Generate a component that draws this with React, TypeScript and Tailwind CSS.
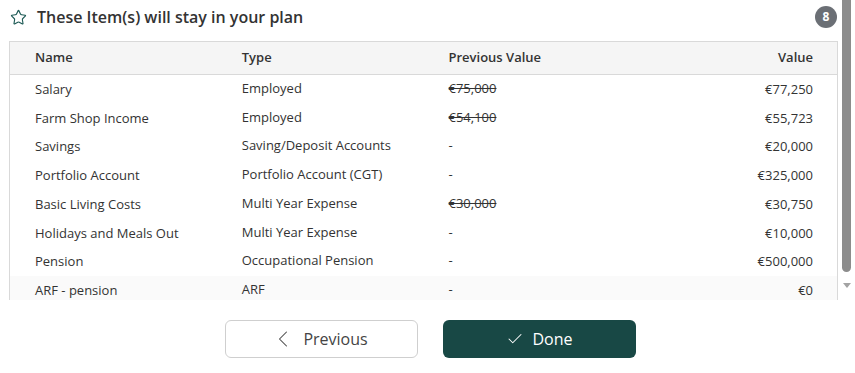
import { Star, ChevronLeft, Check } from "lucide-react";

type Item = {
  name: string;
  type: string;
  previous: string | null;
  value: string;
};

const items: Item[] = [
  { name: "Salary", type: "Employed", previous: "€75,000", value: "€77,250" },
  { name: "Farm Shop Income", type: "Employed", previous: "€54,100", value: "€55,723" },
  { name: "Savings", type: "Saving/Deposit Accounts", previous: null, value: "€20,000" },
  { name: "Portfolio Account", type: "Portfolio Account (CGT)", previous: null, value: "€325,000" },
  { name: "Basic Living Costs", type: "Multi Year Expense", previous: "€30,000", value: "€30,750" },
  { name: "Holidays and Meals Out", type: "Multi Year Expense", previous: null, value: "€10,000" },
  { name: "Pension", type: "Occupational Pension", previous: null, value: "€500,000" },
  { name: "ARF - pension", type: "ARF", previous: null, value: "€0" },
];

export default function App() {
  return (
    <div
      className="h-[373px] w-[855px] overflow-hidden bg-white text-[#333]"
      style={{ fontFamily: '"Open Sans", "Liberation Sans", sans-serif' }}
    >
      <div className="flex h-[300px]">
        <div className="w-[840px] overflow-hidden">
          {/* title */}
          <div className="flex h-[41px] items-center pb-[7px] pl-[10px] pr-[3px]">
            <Star className="h-[17px] w-[17px] text-[#1d5a55]" strokeWidth={1.6} />
            <h2 className="ml-[10px] text-[16px] font-semibold text-[#333]">
              These Item(s) will stay in your plan
            </h2>
            <span className="ml-auto flex h-[22px] w-[22px] items-center justify-center rounded-full bg-[#6b6f75] text-[12px] font-bold text-white">
              8
            </span>
          </div>

          {/* table */}
          <div className="ml-[9px] mr-[2px] h-[259px] overflow-hidden border-x border-t border-[#d9d9d9]">
            <div className="grid h-[33px] grid-cols-4 items-center border-b border-[#d9d9d9] bg-[#f5f5f5] text-[13px] font-semibold text-[#333]">
              <span className="pl-[25px]">Name</span>
              <span className="pl-[25px]">Type</span>
              <span className="pl-[25px]">Previous Value</span>
              <span className="pr-[24px] text-right">Value</span>
            </div>
            {items.map((item, i) => (
              <div
                key={item.name}
                className={`grid h-[28.7px] grid-cols-4 items-center text-[13px] text-[#333] ${
                  i === items.length - 1 ? "bg-[#fafafa]" : ""
                }`}
              >
                <span className="mt-[1px] pl-[25px]">{item.name}</span>
                <span className="-mt-[1px] pl-[25px]">{item.type}</span>
                <span className="-mt-[1px] pl-[25px]">
                  {item.previous ? <s>{item.previous}</s> : "-"}
                </span>
                <span className="mt-[1px] pr-[24px] text-right">{item.value}</span>
              </div>
            ))}
          </div>
        </div>

        {/* scrollbar */}
        <div className="flex w-[15px] flex-col items-start pl-[2px]">
          <div className="h-[272px] w-[9px] rounded-b-full bg-[#8c8c8c]" />
          <div className="ml-[1px] mt-[11px] h-0 w-0 border-x-[4px] border-t-[5px] border-x-transparent border-t-[#a3a3a3]" />
        </div>
      </div>

      {/* actions */}
      <div className="flex justify-center gap-[25px] pl-[6px] pt-[20px]">
        <button
          type="button"
          className="flex h-[38px] w-[193px] items-center justify-center gap-[6px] rounded-[6px] border border-[#cfcfcf] bg-white text-[16px] text-[#444]"
        >
          <ChevronLeft className="-ml-[6px] h-[28px] w-[28px]" strokeWidth={0.9} />
          Previous
        </button>
        <button
          type="button"
          className="flex h-[38px] w-[193px] items-center justify-center gap-[8px] rounded-[6px] bg-[#184845] text-[16px] text-white"
        >
          <Check className="h-[18px] w-[18px]" strokeWidth={1.4} />
          Done
        </button>
      </div>
    </div>
  );
}
